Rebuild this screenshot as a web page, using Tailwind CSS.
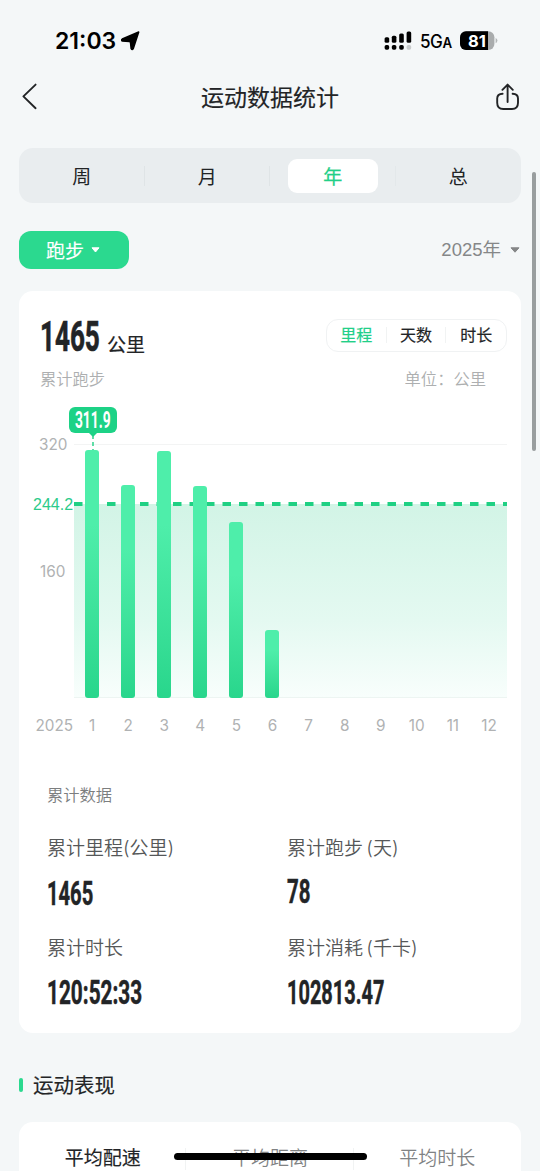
<!DOCTYPE html>
<html lang="zh-CN">
<head>
  <meta charset="UTF-8">
  <meta name="viewport" content="width=device-width, initial-scale=1.0">
  <title>运动数据统计</title>
  <script src="https://cdn.jsdelivr.net/npm/@tailwindcss/browser@4"></script>
</head>
<body class="bg-[#f4f7f8] font-['Inter','Noto_Sans_CJK_SC',sans-serif] text-[#222426]">
<div class="relative w-[540px] h-[1171px] overflow-hidden">

  <!-- Status bar -->
  <div class="flex items-center justify-between h-[70px] pt-[11px] pl-[55px] pr-[42px] text-black">
    <div class="flex items-center gap-[4px]">
      <span class="pt-px text-[23px] leading-none font-semibold w-[62px] whitespace-nowrap">21:03</span>
      <svg class="w-[19px] h-[20px]" viewBox="0 0 18 19">
        <path d="M16.8 1 L11.6 16.8 Q10.6 18.4 9.6 16.8 L9 11 Q8.8 10.2 8 10.1 L1.2 9.6 Q-.2 8.7 1.2 7.6 Z" fill="black" stroke="black" stroke-width="1.4" stroke-linejoin="round" />
      </svg>
    </div>
    <div class="flex items-center">
      <svg class="w-[28px] h-[20px]" viewBox="0 0 28 20">
        <rect x="0.6" y="6.2" width="4.6" height="5.6" rx="1.5" />
        <rect x="7.8" y="4.8" width="4.6" height="7" rx="1.5" />
        <rect x="15.2" y="2.6" width="4.6" height="9.2" rx="1.5" />
        <rect x="22.6" y="0.6" width="4.6" height="11.2" rx="1.5" />
        <rect x="0.6" y="14" width="4.6" height="4.8" rx="1.7" />
        <rect x="7.8" y="14" width="4.6" height="4.8" rx="1.7" />
        <rect x="15.2" y="14" width="4.6" height="4.8" rx="1.7" />
        <rect x="22.6" y="14" width="4.6" height="4.8" rx="1.7" fill="#c9cccd" />
      </svg>
      <span class="ml-[8px] w-[40px] text-[18px] leading-none font-medium whitespace-nowrap tracking-[-0.5px]"><span class="inline-block origin-left scale-x-[0.95] pt-[2px]">5G<span class="text-[14px] font-semibold">A</span></span></span>
      <svg class="w-[38px] h-[20px]" viewBox="0 0 38 20">
        <defs><clipPath id="battery"><rect x="0" y="0.2" width="34.4" height="18.8" rx="6" /></clipPath></defs>
        <g clip-path="url(#battery)">
          <rect width="38" height="20" fill="#a9acad" />
          <rect width="28" height="20" fill="#000" />
        </g>
        <path d="M35.6 7 Q37.4 7.6 37.4 9.6 Q37.4 11.6 35.6 12.2 Z" fill="#b4b7b8" />
        <text x="17" y="15.6" fill="white" font-family="Inter" font-size="16.5" font-weight="700" text-anchor="middle">81</text>
      </svg>
    </div>
  </div>

  <!-- Title bar -->
  <div class="flex items-center justify-between h-[54px] pl-[20px] pr-[20px]">
    <svg class="w-[20px] h-[28px]" viewBox="0 0 20 28" fill="none" stroke="#222426" stroke-width="1.9" stroke-linecap="round" stroke-linejoin="round">
      <path d="M15.6 1.6 L3.4 13.4 L15.6 25.2" />
    </svg>
    <h1 class="pt-[2px] pl-[4px] text-[23px] leading-none font-normal [-webkit-text-stroke:0.15px_#222426]">运动数据统计</h1>
    <svg class="w-[24px] h-[28px]" viewBox="0 0 24 28" fill="none" stroke="#222426" stroke-width="1.9" stroke-linecap="round" stroke-linejoin="round">
      <path d="M11.6 19 V2.4 M6.4 6.8 L11.6 1.6 L16.8 6.8" />
      <path d="M6.6 10.8 C2.8 11 1.2 12.2 1.2 15.4 V19.8 C1.2 24.4 3 26 7.2 26 H16 C20.2 26 22 24.4 22 19.8 V15.4 C22 12.2 20.4 11 16.6 10.8" />
    </svg>
  </div>

  <!-- Period tabs -->
  <div class="mt-[24px] mx-[19px] h-[55px] grid grid-cols-4 items-center justify-items-center rounded-[14px] bg-[#e9edef] text-[19px] leading-none">
    <div class="w-full h-[20px] pt-[3px] pl-px flex items-center justify-center border-r border-[#dfe4e6]">周</div>
    <div class="w-full h-[20px] pt-[3px] pl-px flex items-center justify-center border-r border-[#dfe4e6]">月</div>
    <div class="w-full h-[20px] pl-px flex items-center justify-center border-r border-[#e3e8ea]">
      <span class="w-[90px] h-[34px] pt-[3px] shrink-0 flex items-center justify-center rounded-[9px] bg-white text-[#22cf88] [-webkit-text-stroke:0.3px_#22cf88]">年</span>
    </div>
    <div class="pt-[3px]">总</div>
  </div>

  <!-- Filters -->
  <div class="mt-[28px] mx-[19px] h-[38px] flex items-center justify-between">
    <button class="w-[110px] h-[38px] pr-[2px] flex items-center justify-center gap-[7px] rounded-[12px] bg-[#2bd98f] text-white text-[19px] leading-none">
      <span class="pt-[2px] [-webkit-text-stroke:0.15px_white]">跑步</span>
      <svg class="w-[9px] h-[6px]" viewBox="0 0 9 6"><path d="M1 .8 H8 L4.5 5 Z" fill="white" stroke="white" stroke-linejoin="round" /></svg>
    </button>
    <div class="flex items-center gap-[9px] pr-px leading-none text-[#858788]">
      <span class="font-['Liberation_Sans','Noto_Sans_CJK_SC',sans-serif] text-[18.5px]">2025年</span>
      <svg class="w-[10px] h-[6px]" viewBox="0 0 10 6"><path d="M1 .8 H9 L5 5.2 Z" fill="#858788" stroke="#858788" stroke-linejoin="round" /></svg>
    </div>
  </div>

  <!-- Stats card -->
  <div class="mt-[22px] mx-[19px] h-[742px] pt-[28px] rounded-[14px] bg-white">
    <div class="flex items-center justify-between h-[32px] pl-[21px] pr-[14px]">
      <div class="flex items-center">
        <span class="w-[67px] h-[42px] pt-[2px]"><span class="inline-block origin-left scale-x-[0.62] font-['Roboto'] font-bold text-[42px] leading-[42px] [-webkit-text-stroke:0.7px_#222426]">1465</span></span>
        <span class="pt-[20px] text-[19px] leading-none [-webkit-text-stroke:0.2px_#222426]">公里</span>
      </div>
      <div class="w-[181px] h-[33px] grid grid-cols-3 items-center text-center rounded-[12px] border border-[#f0f2f3] text-[16px] leading-none [-webkit-text-stroke:0.2px_currentColor]">
        <span class="border-r border-[#f1f3f3] text-[#22cf88]">里程</span>
        <span class="border-r border-[#f1f3f3]">天数</span>
        <span>时长</span>
      </div>
    </div>
    <div class="mt-[17px] h-[22px] pt-px pl-[21px] pr-[35px] flex items-center justify-between text-[16.3px] leading-none font-[350] text-[#adafb0]">
      <span>累计跑步</span>
      <span>单位：公里</span>
    </div>

    <!-- Bar chart -->
    <div class="mt-[17px] flex h-[291px]">
      <div class="w-[55px] pt-[27px] flex flex-col text-[15.3px] leading-[22px] text-[#b0b2b3]">
        <span class="pl-[20px]">320</span>
        <span class="mt-[38px] pl-[14px] font-['Liberation_Sans'] text-[16px] text-[#2bcb8a]">244.2</span>
        <span class="mt-[45px] pl-[21px]">160</span>
      </div>
      <div class="relative w-[433px] h-[291px]">
        <div class="absolute inset-x-0 top-[37px] h-px bg-[#f3f4f4]"></div>
        <div class="absolute inset-x-0 top-[97px] bottom-0 border-b border-[#edf5f2] bg-linear-to-b from-[#d2f4e6] via-[#e4f9f1] via-60% to-[#f8fefc]"></div>
        <svg class="absolute left-0 top-[95px] w-[433px] h-[4px]"><path d="M0 2 H433" stroke="#1fd083" stroke-width="4" stroke-dasharray="8.5 8" /></svg>
        <svg class="absolute left-[18px] top-[26px] w-[2px] h-[17px]"><path d="M1 2 V17" stroke="#1fd083" stroke-width="1.4" stroke-dasharray="4 3" /></svg>
        <div class="relative grid grid-cols-12 items-end justify-items-center h-full">
          <div class="w-[14px] rounded-[3px] bg-linear-to-b from-[#4eeeaa] from-30% to-[#28d68c]" style="height: 248px"></div>
          <div class="w-[14px] rounded-[3px] bg-linear-to-b from-[#4eeeaa] from-30% to-[#28d68c]" style="height: 213px"></div>
          <div class="w-[14px] rounded-[3px] bg-linear-to-b from-[#4eeeaa] from-30% to-[#28d68c]" style="height: 247px"></div>
          <div class="w-[14px] rounded-[3px] bg-linear-to-b from-[#4eeeaa] from-30% to-[#28d68c]" style="height: 212px"></div>
          <div class="w-[14px] rounded-[3px] bg-linear-to-b from-[#4eeeaa] from-30% to-[#28d68c]" style="height: 176px"></div>
          <div class="w-[14px] rounded-[3px] bg-linear-to-b from-[#4eeeaa] from-30% to-[#28d68c]" style="height: 68px"></div>
        </div>
        <!-- Value tooltip -->
        <div class="absolute left-[-5px] top-0 w-[48px] h-[26px] flex items-center justify-center rounded-[6px] bg-[#1dd286] text-white">
          <span class="scale-x-[0.6] font-['Roboto'] font-bold text-[23px] leading-none">311.9</span>
          <svg class="absolute left-[20px] top-[25.5px] w-[8px] h-[4px]" viewBox="0 0 8 4"><path d="M0 0 H8 L5 3 Q4 4 3 3 Z" fill="#1dd286" /></svg>
        </div>
      </div>
    </div>
    <div class="mt-[16px] h-[24px] flex items-center text-[15.3px] leading-none text-[#b0b2b3]">
      <span class="w-[55px] pl-[16.5px]">2025</span>
      <div class="w-[433px] grid grid-cols-12 text-center">
        <span>1</span><span>2</span><span>3</span><span>4</span><span>5</span><span>6</span>
        <span>7</span><span>8</span><span>9</span><span>10</span><span>11</span><span>12</span>
      </div>
    </div>

    <!-- Totals -->
    <div class="mt-[45px] px-[28px]">
      <h2 class="text-[16.3px] leading-[24px] font-[350] text-[#7c7e7f]">累计数据</h2>
      <div class="mt-[30px] grid grid-cols-[240px_1fr] text-[19px] leading-[24px] font-[350] text-[#555758]">
        <div class="h-[100px]">
          <p>累计里程(公里)</p>
          <p class="mt-[16px] h-[34px] origin-left scale-x-[0.61] w-fit font-['Roboto'] font-bold text-[33px] leading-[34px] text-[#222426] [-webkit-text-stroke:0.5px_#222426]">1465</p>
        </div>
        <div class="h-[100px]">
          <p class="[word-spacing:-2px]">累计跑步 (天)</p>
          <p class="mt-[14px] h-[34px] origin-left scale-x-[0.62] w-fit font-['Roboto'] font-bold text-[33px] leading-[34px] text-[#222426] [-webkit-text-stroke:0.5px_#222426]">78</p>
        </div>
        <div>
          <p>累计时长</p>
          <p class="mt-[15px] h-[34px] origin-left scale-x-[0.63] w-fit font-['Roboto'] font-bold text-[33px] leading-[34px] text-[#222426] [-webkit-text-stroke:0.5px_#222426]">120:52:33</p>
        </div>
        <div>
          <p class="[word-spacing:-2px]">累计消耗 (千卡)</p>
          <p class="mt-[15px] h-[34px] origin-left scale-x-[0.605] w-fit font-['Roboto'] font-bold text-[33px] leading-[34px] text-[#222426] [-webkit-text-stroke:0.5px_#222426]">102813.47</p>
        </div>
      </div>
    </div>
  </div>

  <!-- Performance -->
  <div class="mt-[40px] mx-[19px] h-[24px] flex items-center gap-[10px]">
    <span class="w-[4px] h-[14px] rounded-full bg-[#2bd98f]"></span>
    <h2 class="pt-[2px] text-[20.5px] leading-none [-webkit-text-stroke:0.15px_#222426]">运动表现</h2>
  </div>
  <div class="mt-[25px] mx-[19px] h-[80px] pt-[26px] grid grid-cols-3 items-start text-center rounded-[14px] bg-white text-[19px] leading-[22px] font-[350] text-[#808283]">
    <span class="pl-px border-r border-[#f1f3f3] font-normal text-[#222426] [-webkit-text-stroke:0.15px_#222426]">平均配速</span>
    <span class="pl-px border-r border-[#f1f3f3]">平均距离</span>
    <span>平均时长</span>
  </div>

  <!-- Scrollbar and home indicator -->
  <div class="absolute left-[532px] top-[172px] w-[4px] h-[279px] rounded-full bg-[#999e9f]"></div>
  <div class="absolute left-[174px] top-[1153px] w-[193px] h-[7px] rounded-full bg-black"></div>
</div>
</body>
</html>
